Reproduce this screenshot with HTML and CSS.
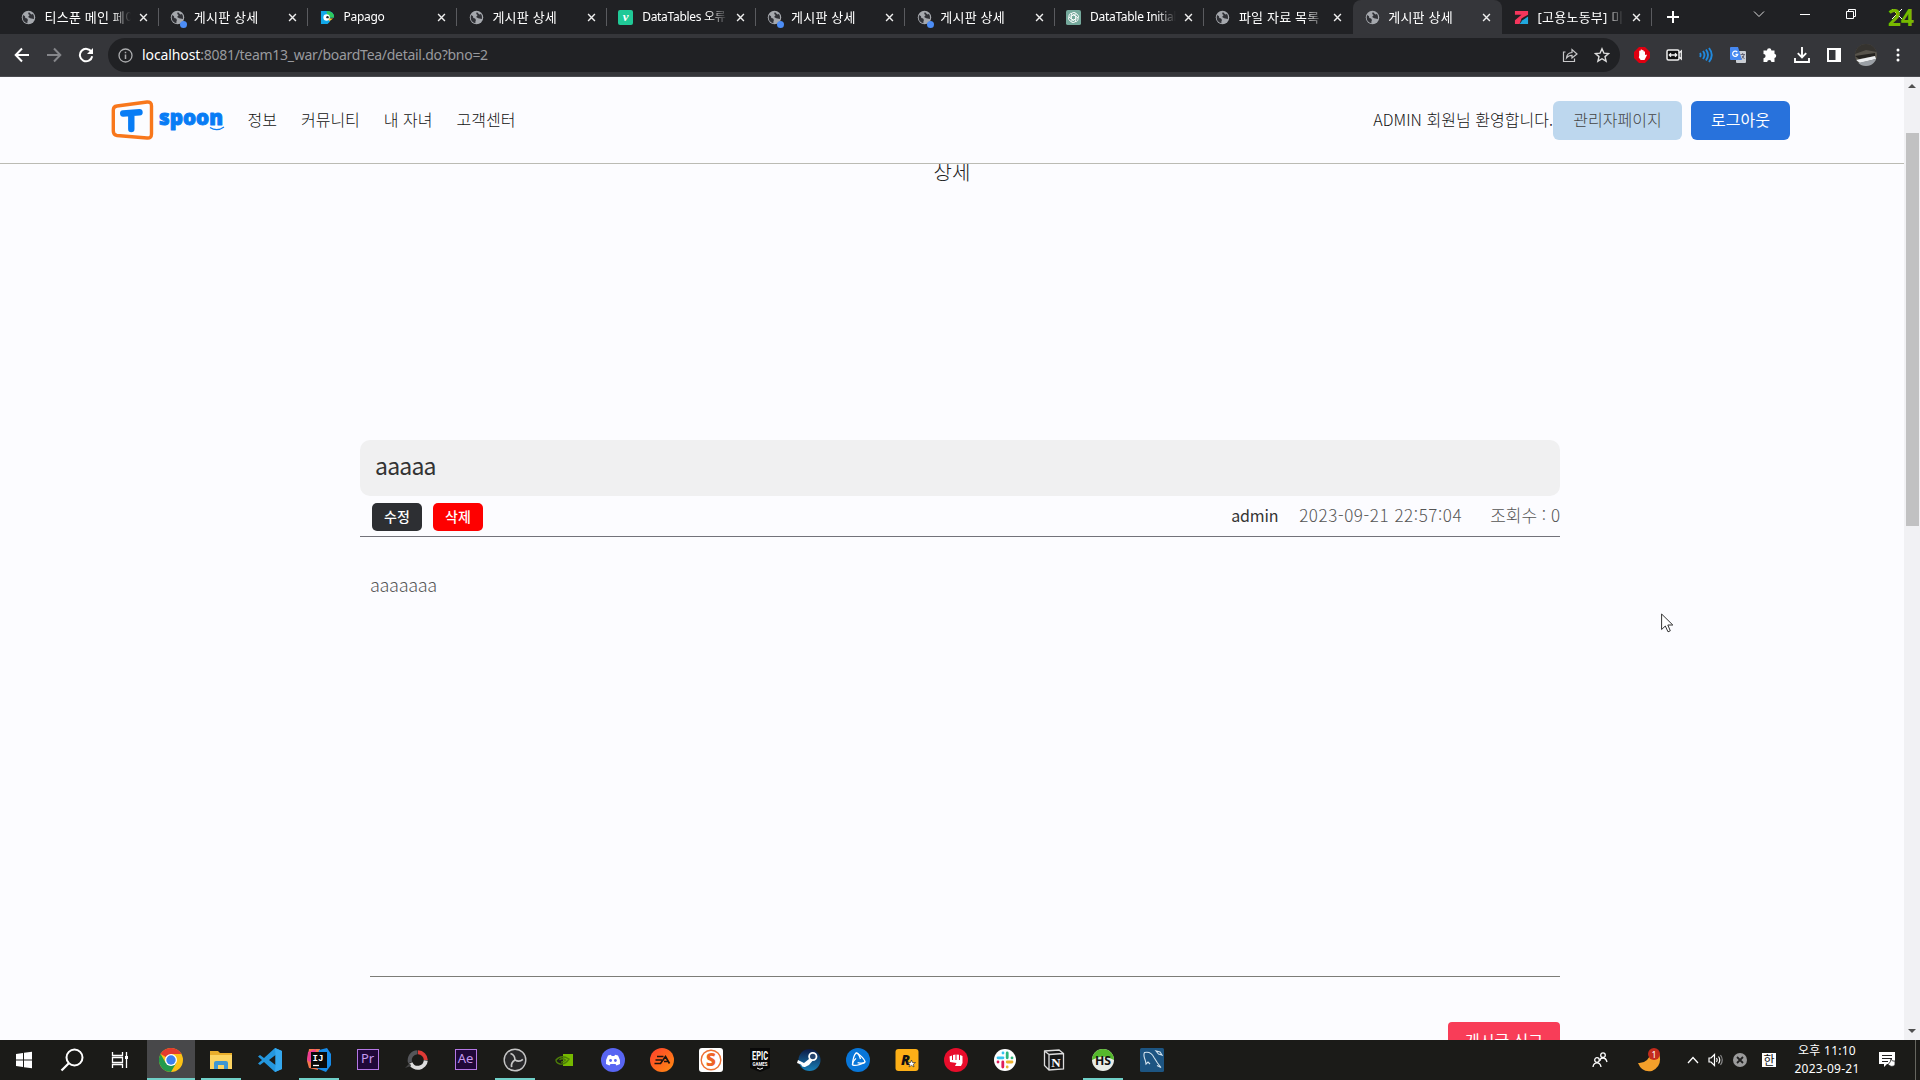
FILE: index.html
```html
<!DOCTYPE html>
<html lang="ko">
<head>
<meta charset="utf-8">
<title>게시판 상세</title>
<link rel="stylesheet" href="styles.css">
</head>
<body>
<svg class="defs" width="0" height="0">
  <symbol id="globe" viewBox="0 0 16 16"><circle cx="8" cy="8" r="7.2" fill="#a5a8ad"/><path d="M2.4 5.2Q5 6.4 4.6 8.4Q7 8.6 7.4 10.6Q6.6 12 6.8 14Q2 13 1.8 8Q1.8 6.4 2.4 5.2ZM8.4 2L7.6 4.2L9.2 5.4L7.6 7.4L9.8 8.8L13.8 9.6Q14.6 6.6 12.8 4.2L11 4.8Z" fill="#303136"/></symbol>
  <symbol id="x" viewBox="0 0 10 10"><path d="M1.2 1.2L8.8 8.8M8.8 1.2L1.2 8.8" stroke="#eee" stroke-width="1.6" fill="none"/></symbol>
</svg>

<div class="tabs">
  <div class="tab"><svg class="fav"><use href="#globe"/></svg><span class="label ko">티스푼 메인 페이지</span><svg class="x"><use href="#x"/></svg></div>
  <div class="tab"><svg class="fav"><use href="#globe"/></svg><i class="dot"></i><span class="label ko">게시판 상세</span><svg class="x"><use href="#x"/></svg></div>
  <div class="tab"><svg class="fav" viewBox="0 0 16 16"><path d="M1 1H8Q15 1 15 8H11Q12 12 8 15H1Z" fill="#11a8e8"/><path d="M7 1Q15 1 15 8H8Z" fill="#2ecb5c"/><circle cx="7" cy="8" r="3.4" fill="#fff"/><circle cx="8" cy="7.6" r="1.3" fill="#222"/><path d="M9 9H14L10 12Z" fill="#ffc72c"/></svg><span class="label">Papago</span><svg class="x"><use href="#x"/></svg></div>
  <div class="tab"><svg class="fav"><use href="#globe"/></svg><span class="label ko">게시판 상세</span><svg class="x"><use href="#x"/></svg></div>
  <div class="tab"><span class="fav velog">v</span><span class="label">DataTables 오류</span><svg class="x"><use href="#x"/></svg></div>
  <div class="tab"><svg class="fav"><use href="#globe"/></svg><i class="dot"></i><span class="label ko">게시판 상세</span><svg class="x"><use href="#x"/></svg></div>
  <div class="tab"><svg class="fav"><use href="#globe"/></svg><i class="dot"></i><span class="label ko">게시판 상세</span><svg class="x"><use href="#x"/></svg></div>
  <div class="tab"><svg class="fav" viewBox="0 0 16 16"><rect width="16" height="16" rx="2" fill="#75a99c"/><g fill="none" stroke="#fff" stroke-width=".9"><path id="petal" d="M8 5.200L10.500 6.600V10.500Q10.500 13.500 7.500 13.500Q5.500 13.500 5 11.500"/><use href="#petal" transform="rotate(60 8 8)"/><use href="#petal" transform="rotate(120 8 8)"/><use href="#petal" transform="rotate(180 8 8)"/><use href="#petal" transform="rotate(240 8 8)"/><use href="#petal" transform="rotate(300 8 8)"/></g></svg><span class="label">DataTable Initialisation</span><svg class="x"><use href="#x"/></svg></div>
  <div class="tab noline"><svg class="fav"><use href="#globe"/></svg><span class="label ko">파일 자료 목록</span><svg class="x"><use href="#x"/></svg></div>
  <div class="tab active noline"><svg class="fav"><use href="#globe"/></svg><span class="label ko">게시판 상세</span><svg class="x"><use href="#x"/></svg></div>
  <div class="tab"><svg class="fav" viewBox="0 0 16 16"><path d="M1 1H15V5L8 9L6 15H1V11L8 5H1Z" fill="#f4365c"/><path d="M9 11L15 7V15H6Z" fill="#21a8de"/></svg><span class="label ko">[고용노동부] 미래</span><svg class="x"><use href="#x"/></svg></div>
  <svg class="plus" viewBox="0 0 12 12"><path d="M6 0V12M0 6H12" stroke="#fff" stroke-width="2"/></svg>
  <div class="winctl">
    <svg width="46" height="28" viewBox="0 0 46 28"><path d="M18 11.500L23 16.500L28 11.500" stroke="#ddd" fill="none"/></svg>
    <svg width="46" height="28" viewBox="0 0 46 28"><path d="M18 14.500H28" stroke="#fff" fill="none"/></svg>
    <svg width="46" height="28" viewBox="0 0 46 28"><path d="M18.500 11.500H25.500V18.500H18.500ZM20.500 11.500V9.500H27.500V16.500H25.500" stroke="#fff" fill="none"/></svg>
    <svg width="46" height="28" viewBox="0 0 46 28"><path d="M18 9L28 19M28 9L18 19" stroke="#fff" fill="none"/></svg>
    <b class="fps">24</b>
  </div>
</div>

<div class="toolbar">
  <svg class="nav" viewBox="0 0 16 16"><path d="M15 8H2M8 1.500L1.700 8L8 14.500" stroke="#fff" stroke-width="2" fill="none"/></svg>
  <svg class="nav" viewBox="0 0 16 16"><path d="M1 8H14M8 1.500L14.300 8L8 14.500" stroke="#85868a" stroke-width="2" fill="none"/></svg>
  <svg class="nav" viewBox="0 0 16 16"><path d="M13.500 5A6.200 6.200 0 1 0 14.200 9.200" stroke="#fff" stroke-width="2" fill="none"/><path d="M15 1V7H9Z" fill="#fff"/></svg>
  <div class="omni">
    <svg width="15" height="15" viewBox="0 0 15 15"><circle cx="7.500" cy="7.500" r="6.500" fill="none" stroke="#aaabad" stroke-width="1.300"/><path d="M7.500 6.500V11M7.500 3.800V5.300" stroke="#aaabad" stroke-width="1.500"/></svg>
    <span class="url"><em>localhost</em>:8081/team13_war/boardTea/detail.do?bno=2</span>
    <svg class="ic" viewBox="0 0 16 16"><path d="M3.500 5H1.500V14.500H12.500V11.500" stroke="#c8c8ca" stroke-width="1.200" fill="none"/><path d="M4.500 11Q5 5.800 10 5.500V2.500L15 7L10 11V8.300Q6.500 8.300 4.500 11Z" stroke="#c8c8ca" stroke-width="1.200" fill="none"/></svg>
    <svg class="ic" viewBox="0 0 16 16"><path d="M8 1.800L9.900 6.100L14.600 6.500L11 9.600L12.100 14.200L8 11.700L3.900 14.200L5 9.600L1.400 6.500L6.100 6.100Z" stroke="#ddd" stroke-width="1.400" fill="none"/></svg>
  </div>
  <div class="exts">
    <svg class="ic" viewBox="0 0 16 16"><path d="M5 0H11L16 5V11L11 16H5L0 11V5Z" fill="#e00010"/><path d="M5.200 8.500V4Q6 3.200 6.600 4V2.800Q7.400 2 8.100 2.800V3.300Q9 2.500 9.600 3.500V4.500Q10.500 4 11 5V8L12.500 7.500Q13.300 8 12.500 9L10.500 13H6.700L4.800 10.500Z" fill="#fff"/></svg>
    <svg class="ic" viewBox="0 0 16 16"><rect x="1" y="3" width="12" height="10" rx="1.500" fill="#111" stroke="#eee" stroke-width="1.500"/><path d="M13 6L15.300 4V12L13 10M3.500 8H10.500M5 6.300L3.300 8L5 9.700M9 6.300L10.700 8L9 9.700" stroke="#eee" stroke-width="1.300" fill="none"/></svg>
    <svg class="ic" viewBox="0 0 16 16"><path d="M2 6Q3.300 8 2 10M5 4Q8 8 5 12M8 2.500Q12 8 8 13.500M11 1Q16.500 8 11 15" stroke="#2089dd" stroke-width="1.900" fill="none"/></svg>
    <svg class="ic" viewBox="0 0 16 16"><rect x="6" y="4" width="10" height="12" rx="1" fill="#c9cdd3"/><path d="M0 1Q0 0 1 0H8L12 13H1Q0 13 0 12Z" fill="#4688f1"/><path d="M7.300 5.200A2.600 2.600 0 1 0 7.800 7.300H5.500" stroke="#fff" stroke-width="1.200" fill="none"/><path d="M10.500 7.500H15M12.700 6V8M14 8Q13.500 10.500 11.500 11.500M12 9L14.500 12" stroke="#667" fill="none"/></svg>
    <svg class="ic" viewBox="0 0 16 16"><path d="M5 3.500A2.200 2.200 0 0 1 9.400 3.500H12.500V6.700A2.200 2.200 0 0 1 12.500 11V15H9.400A2.100 2.100 0 0 0 5.200 15H1.500V11.200A2.100 2.100 0 0 0 1.500 7V3.500Z" fill="#fff"/></svg>
    <svg class="ic" viewBox="0 0 16 16"><path d="M8 0V10M3.800 6.200L8 10.400L12.200 6.200M1 11V15H15V11" stroke="#fff" stroke-width="1.900" fill="none"/></svg>
    <svg class="ic" viewBox="0 0 16 16"><path d="M1 1H15V15H1ZM3 3V13H9.500V3Z" fill="#fff" fill-rule="evenodd"/></svg>
    <svg class="ic" viewBox="0 0 22 22"><clipPath id="av"><circle cx="11" cy="11" r="11"/></clipPath><g clip-path="url(#av)"><rect width="22" height="22" fill="#57534b"/><path d="M0 0H22V8L11 6L0 10Z" fill="#35332f"/><path d="M0 12L20 9V12L4 15Z" fill="#24221f"/><path d="M1 16L20 12L21 15L5 19Z" fill="#eceef0"/><path d="M3 19L21 15V22H3Z" fill="#9a9fa5"/></g></svg>
    <svg class="ic" viewBox="0 0 16 16"><g fill="#fff"><circle cx="8" cy="3" r="1.500"/><circle cx="8" cy="8" r="1.500"/><circle cx="8" cy="13" r="1.500"/></g></svg>
  </div>
</div>

<div class="view">
  <div class="page">
    <header class="head">
      <svg class="logo" width="116" height="40" viewBox="0 0 116 40"><path d="M6 6L36 2Q40.500 1.700 40.500 6V34Q40.500 38.500 36 38L6 35.500Q2.300 35 2.300 31V10Q2.300 6.500 6 6Z" fill="none" stroke="#f8771c" stroke-width="3.400"/><path d="M12.200 13.500L28.500 12.200M20.300 13V29" stroke="#087cf5" stroke-width="6.400" stroke-linecap="round" fill="none"/><text class="logo-text" x="48" y="25" textLength="64" lengthAdjust="spacingAndGlyphs">spoon</text><path d="M99 27.500Q106 32 113 27" fill="none" stroke="#087cf5" stroke-width="1.200"/></svg>
      <nav class="menu"><a>정보</a><a>커뮤니티</a><a>내 자녀</a><a>고객센터</a></nav>
      <span class="hello">ADMIN 회원님 환영합니다.</span>
      <a class="btn admin"><span>관리자페이지</span></a>
      <a class="btn logout"><span>로그아웃</span></a>
    </header>
    <main class="content">
      <p class="crumb">상세</p>
      <article class="post">
        <h1 class="title">aaaaa</h1>
        <div class="info">
          <a class="mini edit">수정</a><a class="mini del">삭제</a>
          <span class="author">admin</span><span class="date">2023-09-21 22:57:04</span><span class="hits">조회수 : 0</span>
        </div>
        <div class="text">aaaaaaa</div>
        <a class="report">게시글 신고</a>
      </article>
    </main>
  </div>
  <div class="scroll"><i class="up"></i><i class="thumb"></i><i class="down"></i></div>
</div>

<div class="taskbar">
  <div class="task"><svg viewBox="0 0 24 24"><path d="M4 6L11 5V11.500H4ZM12 4.800L20 3.800V11.500H12ZM4 12.500H11V19L4 18ZM12 12.500H20V20.200L12 19.200Z" fill="#fff"/></svg></div>
  <div class="task"><svg viewBox="0 0 24 24"><circle cx="14.500" cy="9.500" r="8" fill="none" stroke="#fff" stroke-width="2"/><path d="M8.800 15.200L1.500 22.500" stroke="#fff" stroke-width="2.200"/></svg></div>
  <div class="task"><svg viewBox="0 0 24 24"><path d="M4.500 4V7.500H14.500V4M4.500 20V16.500H14.500V20M4.500 9.500H14.500V14.500H4.500ZM18.500 4V20" fill="none" stroke="#fff" stroke-width="1.300"/><rect x="17" y="8" width="3" height="3" fill="#fff"/></svg></div>
  <div class="task current"><svg viewBox="0 0 24 24"><circle cx="12" cy="12" r="12" fill="#fbc116"/><path d="M12 12L1.600 6A12 12 0 0 1 22.400 6H12Z" fill="#e33b2e"/><path d="M1.600 6A12 12 0 0 0 12 24L17.200 15L12 12L6.800 15Z" fill="#229a4c"/><circle cx="12" cy="12" r="6" fill="#fff"/><circle cx="12" cy="12" r="4.700" fill="#3c80ee"/></svg></div>
  <div class="task run"><svg viewBox="0 0 24 24"><path d="M1 3H9L11 5H23V21H1Z" fill="#e9ae2c"/><path d="M1 7H23V21H1Z" fill="#fcd462"/><path d="M5 21V15Q5 13 7 13H17Q19 13 19 15V21H15V17H9V21Z" fill="#3f97d3"/></svg></div>
  <div class="task"><svg viewBox="0 0 24 24"><path d="M17 0L24 3V21L17 24L6 14L2 17L0 15.500L4 12L0 8.500L2 7L6 10ZM17.500 7L11 12L17.500 17Z" fill="#2497de" fill-rule="evenodd"/><path d="M17 0L24 3V21L17 24L17.500 17V7Z" fill="#35a8ee"/></svg></div>
  <div class="task run"><svg viewBox="0 0 24 24"><path d="M2 1H13L11 22L2 20L0 13Z" fill="#f5764d"/><path d="M1 4L9 1L6 16L0 12Z" fill="#ee3d93"/><path d="M12 2L20 0L24 6V17L19 24L9 20Z" fill="#178be8"/><rect x="4" y="4" width="16" height="16" fill="#090909"/><text class="ij" x="5.500" y="13">IJ</text><path d="M6 17.500H12" stroke="#fff" stroke-width="1.300"/></svg></div>
  <div class="task"><span class="adobe">Pr</span></div>
  <div class="task"><svg viewBox="0 0 24 24"><g fill="none" stroke-width="4"><path d="M13 4.200A8 8 0 0 1 20.800 12" stroke="#df3a36"/><path d="M20.800 12.500A8 8 0 0 1 5.500 15" stroke="#ddd"/><path d="M5 14.500A8 8 0 0 1 12.500 4.200" stroke="#55565a"/></g><path d="M0 20L5 15L6 18Z" fill="#444"/></svg></div>
  <div class="task"><span class="adobe">Ae</span></div>
  <div class="task run"><svg viewBox="0 0 24 24"><circle cx="12" cy="12" r="10.800" fill="#28282a" stroke="#c5c5c5" stroke-width="1.400"/><g fill="none" stroke="#c5c5c5" stroke-width="1.700"><path d="M12 12Q12 7 7.500 5.500"/><path d="M12 12Q12 7 7.500 5.500" transform="rotate(120 12 12)"/><path d="M12 12Q12 7 7.500 5.500" transform="rotate(240 12 12)"/></g></svg></div>
  <div class="task"><svg viewBox="0 0 24 24"><path d="M11 6H21V18H11Z" fill="#76b900"/><path d="M4 12Q9 6 17 11Q13 17 8 16Q4 15 4 12ZM7.500 12Q10 9.500 13.500 12Q11 14.500 9 13.800" fill="none" stroke="#4d7d08" stroke-width="1.400"/></svg></div>
  <div class="task"><svg viewBox="0 0 24 24"><circle cx="12" cy="12" r="12" fill="#5865f2"/><path d="M7 7.500L10 6.700L10.600 8H13.400L14 6.700L17 7.500Q19.500 11.500 19 16L15.500 17.500L14.500 16H9.500L8.500 17.500L5 16Q4.500 11.500 7 7.500Z" fill="#fff"/><circle cx="9.600" cy="12.500" r="1.400" fill="#5865f2"/><circle cx="14.400" cy="12.500" r="1.400" fill="#5865f2"/></svg></div>
  <div class="task"><svg viewBox="0 0 24 24"><linearGradient id="ea" x2="1" y2="1"><stop stop-color="#ff3e2d"/><stop offset="1" stop-color="#ff8d10"/></linearGradient><circle cx="12" cy="12" r="12" fill="url(#ea)"/><path d="M7 8.500H13.500M5.500 12H12M4.500 15.500H10.500L15.500 8.500L19.500 15.500M14 13.500H18" stroke="#1b1410" stroke-width="1.700" fill="none"/></svg></div>
  <div class="task"><svg viewBox="0 0 24 24"><rect width="24" height="24" rx="3" fill="#fff"/><circle cx="12" cy="12" r="9.800" fill="none" stroke="#ee7132" stroke-width="1.400"/><text class="s" x="12" y="17.700">S</text></svg></div>
  <div class="task"><svg viewBox="0 0 24 24"><path d="M2 0H22V20L12 24L2 20Z" fill="#090909"/><text class="epic" x="12" y="11.500" textLength="16" lengthAdjust="spacingAndGlyphs">EPIC</text><text class="games" x="12" y="17.500" textLength="15" lengthAdjust="spacingAndGlyphs">GAMES</text><path d="M9 20L12 21.300L15 20" stroke="#fff" fill="none"/></svg></div>
  <div class="task"><svg viewBox="0 0 24 24"><linearGradient id="st" x2="0" y2="1"><stop stop-color="#0d1a45"/><stop offset="1" stop-color="#1780b8"/></linearGradient><circle cx="12.500" cy="12" r="11" fill="url(#st)"/><path d="M1 12L7 15L12 11L18 10L12 17L8 19Q5 19.500 4 16.500L0 15Z" fill="#fff"/><circle cx="15.800" cy="8.500" r="3.700" fill="#24446f" stroke="#fff" stroke-width="1.800"/></svg></div>
  <div class="task"><svg viewBox="0 0 24 24"><circle cx="12" cy="12" r="12" fill="#0876d8"/><g fill="none" stroke="#fff" stroke-width="1.300"><path id="orb" d="M6.500 17Q7 8 10 5Q12.500 4.500 14.500 11"/><use href="#orb" transform="rotate(120 12 12)"/><use href="#orb" transform="rotate(240 12 12)"/></g></svg></div>
  <div class="task"><svg viewBox="0 0 24 24"><rect x=".5" y="1" width="23" height="22" rx="3" fill="#fcaf17"/><text class="r" x="6" y="16.500">R</text><path d="M16.500 12L17.500 14.500H20.500L18.300 16.200L19 19L16.500 17.400L14 19L14.800 16.200L12.500 14.500H15.500Z" fill="#fff" stroke="#222" stroke-width=".6"/></svg></div>
  <div class="task"><svg viewBox="0 0 24 24"><circle cx="12" cy="12" r="12" fill="#e80d2b"/><path d="M5.500 8.500L8 7.500V12H9V7L11.500 6.500V12H12.500V6.500L15 6.700V12H16V7L18.500 8V15L17 18H11L12.500 15L6 14Z" fill="#fff"/></svg></div>
  <div class="task"><svg viewBox="0 0 24 24"><circle cx="12" cy="12" r="11" fill="#fff"/><g stroke-width="2.800" stroke-linecap="round"><path d="M10 5V5.100M5 9.800H10" stroke="#36c5f0"/><path d="M14.200 5V9.800M19 9.800V9.900" stroke="#2eb67d"/><path d="M19 14H14.200M14.200 19V18.900" stroke="#ecb22e"/><path d="M5 14V14.100M9.800 19V14" stroke="#e01e5a"/></g></svg></div>
  <div class="task"><svg viewBox="0 0 24 24"><path d="M2.500 3L17 2L21.500 5.500V21L7 22L2.500 17.500ZM7 6.500L21.500 5.500M7 6.500V22M2.500 3L7 6.500" fill="#161616" stroke="#ddd" stroke-width="1.300"/><text class="n" x="14" y="18.500">N</text></svg></div>
  <div class="task run"><svg viewBox="0 0 24 24"><circle cx="12" cy="12" r="11" fill="#e8ebe6"/><path d="M1 12A11 11 0 0 1 23 12Q12 5 1 12Z" fill="#55b82c"/><text class="hs" x="12" y="16.500" textLength="16" lengthAdjust="spacingAndGlyphs">HS</text></svg></div>
  <div class="task"><svg viewBox="0 0 24 24"><rect width="24" height="24" rx="1.500" fill="#1d5582"/><path d="M5.500 13Q3 7 4.500 4.500Q11 3 14 9.500L17.500 15L21 19.500L17 17.500M5.500 13L6 16L8 14L10 16M16 3L18.500 6L22 7L20 4Z" stroke="#d4e4ee" stroke-width="1.100" fill="none"/></svg></div>
  <div class="tray">
    <svg class="people" width="16" height="16" viewBox="0 0 16 16"><g fill="none" stroke="#fff" stroke-width="1.300"><circle cx="5" cy="8" r="2.300"/><path d="M1 15Q1.500 10.800 5 10.800T9 15"/><circle cx="11" cy="3.200" r="2.300"/><path d="M8 9Q8 6 11 6T15 10"/></g></svg>
    <svg class="moon" width="26" height="26" viewBox="0 0 26 26"><path d="M2 16Q12 17 16 4L23 6Q27 19 16 24Q6 26 2 16Z" fill="#f5a02a"/><circle cx="18" cy="7" r="6" fill="#c42b1c"/><text class="badge" x="18" y="10.500">1</text></svg>
    <svg class="chev" width="12" height="8" viewBox="0 0 12 8"><path d="M1 7L6 1.500L11 7" stroke="#fff" stroke-width="1.300" fill="none"/></svg>
    <svg class="spk" width="16" height="14" viewBox="0 0 16 14"><path d="M1 5H3L6.500 1.500V12.500L3 9H1ZM8.500 5Q10 7 8.500 9M10.500 3.500Q13 7 10.500 10.500" stroke="#fff" stroke-width="1.200" fill="none"/><path d="M12.500 2Q16 7 12.500 12" stroke="#888" stroke-width="1.200" fill="none"/></svg>
    <svg class="err" width="14" height="14" viewBox="0 0 14 14"><circle cx="7" cy="7" r="7" fill="#9b9b9b"/><path d="M4 4L10 10M10 4L4 10" stroke="#222" stroke-width="1.800"/></svg>
    <span class="ime">한</span>
    <span class="clock">오후 11:10<br>2023-09-21</span>
    <svg class="noti" width="17" height="16" viewBox="0 0 17 16"><path d="M0 0H16V12H8L5 15V12H0Z" fill="#fff"/><path d="M3 3.500H13M3 6.500H13M3 9.500H9" stroke="#222" stroke-width="1.200"/><path d="M12 7Q12 10 9 12.500Q13 16 16 13V9Q13 10 12 7Z" fill="#fff" stroke="#222" stroke-width=".8"/></svg>
    <i class="edge"></i>
  </div>
</div>
<svg class="cursor" width="13" height="20" viewBox="0 0 13 20"><path d="M.6 1V16.500L4.300 13L7 18.800L9.300 17.800L6.800 12H11.800Z" fill="#fff" stroke="#333" stroke-width="1"/></svg>
</body>
</html>
```
FILE: styles.css
```css
* { box-sizing: border-box; }
body { margin: 0; width: 1920px; height: 1080px; overflow: hidden; display: flex; flex-direction: column; font-family: "Noto Sans CJK KR", sans-serif; background: #fcfcff; }
svg { display: block; flex: none; }
.defs { position: absolute; }

/* browser chrome */
.tabs { height: 34px; display: flex; background: #202124; padding-left: 9px; flex: none; }
.tab { width: 149.3px; height: 34px; display: flex; align-items: center; padding: 0 10.5px 5px 12px; position: relative; flex: none; }
.tab::after { content: ""; position: absolute; right: -.5px; top: 8px; width: 1px; height: 18px; background: #5a5b5f; }
.noline::after { display: none; }
.active { background: #35363a; border-radius: 8px 8px 0 0; }
.fav { width: 15px; height: 15px; margin-top: 5px; flex: none; }
.velog { background: #20c997; border-radius: 2px; color: #fff; font: italic bold 13px/14px "Liberation Serif", serif; text-align: center; }
.dot { position: absolute; left: 22px; top: 21px; width: 7px; height: 7px; border-radius: 50%; background: #4c8df6; }
.label { flex: 1; margin: 5px 8px 0 9px; font: 12px/18px "Noto Sans", "Noto Sans CJK KR", sans-serif; letter-spacing: -.3px; color: #fff; white-space: nowrap; overflow: hidden; -webkit-mask-image: linear-gradient(90deg, #000 78%, transparent); mask-image: linear-gradient(90deg, #000 78%, transparent); }
.ko { font-size: 13px; letter-spacing: .25px; margin-left: 8.5px; }
.x { width: 9px; height: 9px; margin-top: 5px; }
.plus { width: 12px; height: 12px; margin: 11px 0 0 16px; }
.winctl { margin-left: auto; display: flex; position: relative; }
.fps { position: absolute; right: 6px; top: 5px; color: #78b900; font: bold 23px/25px "Noto Sans", sans-serif; }
.toolbar { height: 43px; flex: none; display: flex; align-items: center; background: #35363a; padding-left: 14px; border-bottom: 1px solid #4a4b50; }
.nav { width: 16px; height: 16px; margin-right: 16px; }
.omni { width: 1512px; height: 34px; border-radius: 17px; background: #202124; display: flex; align-items: center; padding: 0 10px 0 10px; margin-left: -2px; }
.url { font: 14px/20px "Noto Sans", sans-serif; color: #999a9e; margin: 0 auto 0 9px; letter-spacing: -.28px; }
.url em { font-style: normal; color: #fff; letter-spacing: -.1px; }
.ic { width: 16px; height: 16px; }
.omni .ic + .ic { margin-left: 16px; }
.exts { display: flex; gap: 16px; margin-left: 14px; }
.exts .ic:nth-child(8) { width: 22px; height: 22px; margin: -3px; }

/* page */
.view { flex: 1; display: flex; min-height: 0; }
.page { flex: 1; display: flex; flex-direction: column; min-width: 0; }
.head { height: 87px; flex: none; display: flex; align-items: center; padding: 0 114px 0 111px; border-bottom: 1px solid #bbbbb4; font-size: 16px; font-weight: 300; color: #111; }
.logo-text { font: 900 21px "Noto Sans", sans-serif; fill: #087cf5; stroke: #087cf5; stroke-width: 1; stroke-linejoin: round; }
.menu { display: flex; gap: 24px; margin: 0 auto 2px 20.500px; }
.hello { margin-bottom: 2px; letter-spacing: .03px; }
.btn { height: 39px; border-radius: 6px; display: flex; align-items: center; justify-content: center; }
.btn span { margin-bottom: 2px; }
.admin { width: 129px; background: #bdd7ee; color: #444; margin-right: 9px; }
.logout { width: 99px; background: #2872dc; color: #fff; font-weight: 400; }
.content { flex: 1; min-height: 0; overflow: hidden; display: flex; flex-direction: column; align-items: center; }
.crumb { margin: -7px 0 0; font-size: 20px; line-height: 30px; font-weight: 300; color: #222; height: 283px; flex: none; }
.post { width: 1200px; margin-left: 16px; display: flex; flex-direction: column; flex: none; }
.title { height: 56px; margin: 0; padding-left: 15px; border-radius: 10px; background: #f0f0f1; font-size: 23px; line-height: 51px; font-weight: 400; color: #333; letter-spacing: -.8px; }
.info { height: 41px; display: flex; align-items: center; border-bottom: 1px solid #72727a; padding-left: 12px; font-size: 17px; line-height: 24px; font-weight: 300; color: #555; }
.mini { width: 50px; height: 28px; margin: 1px 11px 0 0; border-radius: 5px; color: #fff; font-size: 14px; line-height: 26px; font-weight: 500; text-align: center; }
.edit { background: #2d2f33; }
.del { background: #fe0000; }
.author { margin: 0 0 3px auto; font-size: 16px; font-weight: 400; color: #333; letter-spacing: -.2px; }
.date { margin: 0 28px 3px 21px; letter-spacing: .58px; }
.hits { margin-bottom: 3px; }
.text { height: 440px; margin-left: 10px; padding-top: 32px; border-bottom: 1px solid #7c7c78; font-size: 18px; line-height: 30px; font-weight: 300; color: #555; letter-spacing: -.3px; }
.report { align-self: flex-end; width: 112px; height: 40px; margin-top: 45px; border-radius: 4px; background: #f83d58; color: #fff; font-size: 16px; line-height: 37px; text-align: center; }
.scroll { width: 16px; background: #f1f1f4; display: flex; flex-direction: column; align-items: center; }
.up { margin-top: 7px; border: 4px solid transparent; border-top: 0; border-bottom-color: #505050; }
.thumb { margin-top: 45px; width: 13px; height: 393px; background: #c1c1c2; }
.down { margin: auto 0 7px; border: 4px solid transparent; border-bottom: 0; border-top-color: #505050; }

/* taskbar */
.taskbar { height: 40px; flex: none; display: flex; background: #1b1b18; }
.task { width: 49px; height: 40px; display: flex; align-items: center; justify-content: center; position: relative; flex: none; }
.task:nth-child(-n+3) { width: 48px; }
.task svg { width: 24px; height: 24px; }
.task.current { width: 48px; margin: 0 1px 0 3px; background: #48484a; border-bottom: 2px solid #70d0c8; padding-top: 2px; }
.run::after { content: ""; position: absolute; left: 5px; right: 4px; bottom: 0; height: 2px; background: #70d0c8; }
.adobe { width: 22px; height: 21px; border: 1.500px solid #b477e4; background: #200838; color: #c69aee; font: 13px/17px "Noto Sans", sans-serif; text-align: center; margin-top: -2px; }
.ij { font: bold 9px "Liberation Mono", monospace; fill: #fff; }
.s { font: 900 17px "Noto Sans", sans-serif; fill: #ee6425; text-anchor: middle; }
.epic { font: bold 12px "Roboto", sans-serif; fill: #fff; text-anchor: middle; }
.games { font: bold 4.500px "Roboto", sans-serif; fill: #fff; text-anchor: middle; }
.r { font: italic 900 14px "Noto Sans", sans-serif; fill: #111; }
.n { font: bold 13px "Liberation Serif", serif; fill: #fff; text-anchor: middle; }
.hs { font: bold 13px "Noto Sans", sans-serif; fill: #111; text-anchor: middle; }
.tray { margin-left: auto; display: flex; align-items: center; }
.people { margin-right: 28px; }
.moon { margin-right: 25px; }
.badge { font: 9px "Noto Sans", sans-serif; fill: #fff; text-anchor: middle; }
.chev { margin-right: 9px; }
.spk { margin-right: 9px; }
.err { margin-right: 15px; }
.ime { width: 14px; height: 14px; background: #fff; color: #111; font-size: 12px; line-height: 14px; text-align: center; }
.clock { width: 76px; margin: 0 14px 0 13px; color: #fff; font: 12px/18px "Noto Sans", "Noto Sans CJK KR", sans-serif; letter-spacing: .25px; text-align: center; }
.noti { margin-right: 19px; }
.edge { width: 1px; height: 40px; background: #66665f; margin-right: 4px; }
.cursor { position: absolute; left: 1661px; top: 613px; }
```
